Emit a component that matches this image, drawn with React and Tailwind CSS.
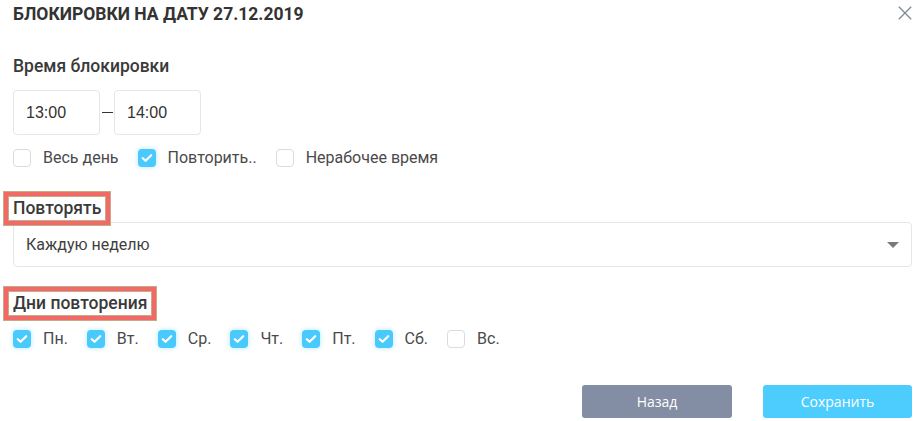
import React from "react";

function Check({ checked }) {
  if (checked) {
    return (
      <span className="flex h-[18px] w-[18px] shrink-0 items-center justify-center rounded-[4px] bg-[#4ac9fc] shadow-[0_0_4px_1px_rgba(74,201,252,0.3)]">
        <svg width="12" height="10" viewBox="0 0 12 10" fill="none">
          <path d="M1.8 5.2 L4.6 7.8 L10.2 2.2" stroke="#fff" strokeWidth="2.2" strokeLinecap="round" strokeLinejoin="round" />
        </svg>
      </span>
    );
  }
  return <span className="block h-[18px] w-[18px] shrink-0 rounded-[4px] border border-[#d6dce0] bg-white" />;
}

function CheckItem({ checked, label }) {
  return (
    <label className="flex items-center gap-[12px] text-[16px] leading-5 text-[#4a4a4a]">
      <Check checked={checked} />
      <span>{label}</span>
    </label>
  );
}

function Marked({ children }) {
  return (
    <div className="relative w-fit text-[17.5px] font-medium leading-5 text-[#3a3a3a]">
      <span className="pointer-events-none absolute -left-[9px] -right-[9px] -top-[6px] -bottom-[7px] border-4 border-[#f26a66] shadow-[0_0_0_1px_#c4aa88,inset_0_0_0_1px_#c4aa88]" />
      <span className="relative">{children}</span>
    </div>
  );
}

export default function App() {
  const days = [
    ["Пн.", true],
    ["Вт.", true],
    ["Ср.", true],
    ["Чт.", true],
    ["Пт.", true],
    ["Сб.", true],
    ["Вс.", false],
  ];
  return (
    <div className="flex h-[421px] w-[914px] flex-col overflow-hidden bg-white pl-[13px] pr-[2px] font-['Roboto',sans-serif]">
      <div className="flex items-start justify-between pt-[2px]">
        <h1 className="text-[17.5px] font-bold leading-6 text-[#333]">БЛОКИРОВКИ НА ДАТУ 27.12.2019</h1>
        <svg className="mt-[4px]" width="14" height="14" viewBox="0 0 14 14" fill="none">
          <path d="M0.8 0.8 L13.2 13.2 M13.2 0.8 L0.8 13.2" stroke="#7e8893" strokeWidth="1.3" />
        </svg>
      </div>

      <div className="mt-[30px] text-[17.5px] font-medium leading-5 text-[#3a3a3a]">Время блокировки</div>

      <div className="mt-[14px] flex items-center">
        <div className="flex h-[45px] w-[87px] items-center rounded-[4px] border border-[#e3e6ea] pl-[12px] font-['Liberation_Sans',sans-serif] text-[16px] text-[#333]">13:00</div>
        <div className="ml-[2px] mr-[1px] h-[1.6px] w-[11px] bg-[#333]" />
        <div className="flex h-[45px] w-[87px] items-center rounded-[4px] border border-[#e3e6ea] pl-[12px] font-['Liberation_Sans',sans-serif] text-[16px] text-[#333]">14:00</div>
      </div>

      <div className="mt-[13px] flex items-center gap-[19px]">
        <CheckItem checked={false} label="Весь день" />
        <CheckItem checked={true} label="Повторить.." />
        <CheckItem checked={false} label="Нерабочее время" />
      </div>

      <div className="mt-[30px]">
        <Marked>Повторять</Marked>
      </div>

      <div className="mt-[4px] flex h-[45px] items-center justify-between rounded-[4px] border border-[#e3e6ea] pl-[12px] pr-[12px] text-[16px] text-[#3f3f3f]">
        <span>Каждую неделю</span>
        <svg width="12" height="6" viewBox="0 0 12 6">
          <polygon points="0,0 12,0 6,6" fill="#7a7a7a" />
        </svg>
      </div>

      <div className="mt-[26px]">
        <Marked>Дни повторения</Marked>
      </div>

      <div className="mt-[16px] flex items-center gap-[19px]">
        {days.map(([d, c]) => (
          <CheckItem key={d} checked={c} label={d} />
        ))}
      </div>

      <div className="mt-auto mb-[3px] flex justify-end gap-[31px] font-['Open_Sans',sans-serif] text-[14px] text-white">
        <button className="flex h-[33px] w-[150px] items-center justify-center rounded-[3px] bg-[#838da3]">Назад</button>
        <button className="flex h-[33px] w-[149px] items-center justify-center rounded-[3px] bg-[#4dcdfd]">Сохранить</button>
      </div>
    </div>
  );
}
